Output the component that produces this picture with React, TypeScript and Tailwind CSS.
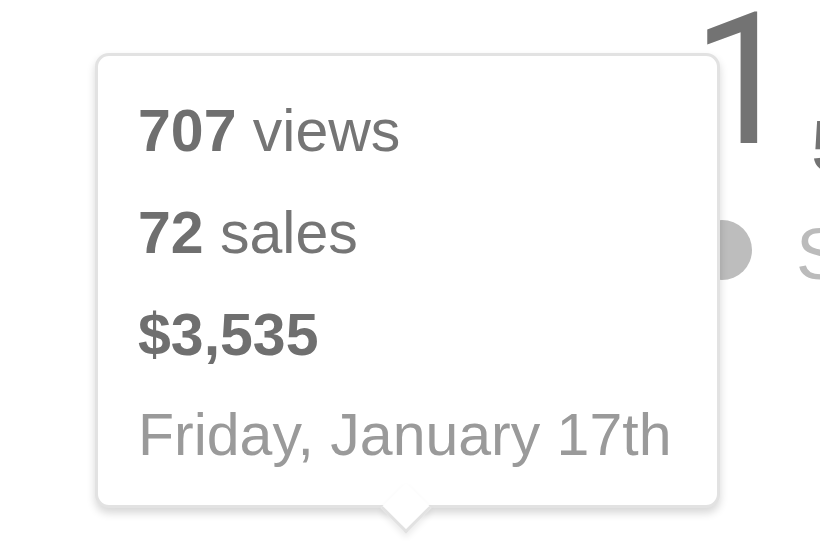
export default function App() {
  return (
    <div className="relative w-[820px] h-[560px] overflow-hidden bg-white font-['Liberation_Sans',Arial,sans-serif]">
      {/* chart legend behind the tooltip */}
      <div className="pl-[700px]">
        <div className="flex items-start whitespace-nowrap">
          <span className="shrink-0 ml-[-8px] mt-[-11px] font-['Roboto',sans-serif] text-[183px] leading-none text-[#737373]">1</span>
          <span className="shrink-0 ml-[17px] mt-[110px] text-[72px] font-bold leading-none text-[#737373]">5</span>
        </div>
        <div className="mt-[36px] flex items-start whitespace-nowrap">
          <span className="shrink-0 ml-[-8px] mt-[2px] w-[60px] h-[60px] rounded-full bg-[#bdbdbd]"></span>
          <span className="shrink-0 ml-[44px] text-[72px] leading-none text-[#bbbbbb]">Sales</span>
        </div>
      </div>

      {/* Tooltip */}
      <div className="absolute left-[95px] top-[53px] w-[625px] h-[455px] rounded-[14px] border-[3px] border-[#e2e2e2] bg-white shadow-[0_5px_9px_rgba(0,0,0,0.16)]">
        <div className="relative z-10 pl-[40px] pt-[24px] text-[59px] leading-[102px]">
          <div className="text-[#757575]">
            <span className="font-bold text-[#6f6f6f]">707</span> views
          </div>
          <div className="text-[#757575]">
            <span className="font-bold text-[#6f6f6f]">72</span> sales
          </div>
          <div className="font-bold text-[#6f6f6f]">$3,535</div>
          <div className="mt-[-2px] text-[#9a9a9a]">Friday, January 17th</div>
        </div>
        <div className="absolute left-[290px] bottom-[-21px] w-[36px] h-[36px] rotate-45 border-r-[3px] border-b-[3px] border-[#e2e2e2] bg-white shadow-[3px_3px_6px_rgba(0,0,0,0.08)]"></div>
      </div>
    </div>
  );
}
